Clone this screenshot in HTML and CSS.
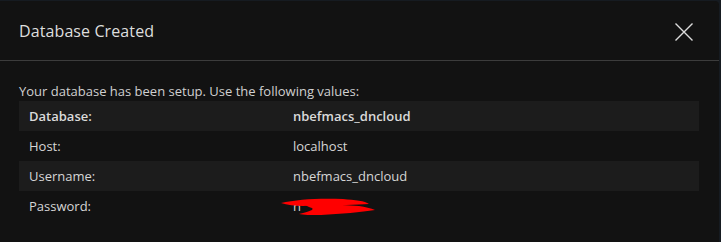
FILE: index.html
```html
<!DOCTYPE html>
<html lang="en">
  <head>
    <meta charset="UTF-8" />
    <title>Database Created</title>
    <link rel="stylesheet" href="styles.css">
  </head>
  <body>
    <div class="db-modal">
      <div class="db-modal-header">
        <h4 class="db-modal-title">Database Created</h4>
        <button class="db-modal-close" type="button" aria-label="Close">
          <svg width="18" height="18" viewBox="0 0 18 18">
            <path d="M0.5 0.5 L17.5 17.5 M17.5 0.5 L0.5 17.5" stroke="#dcdcdc" stroke-width="1.4" fill="none" />
          </svg>
        </button>
      </div>
      <div class="db-modal-body">
        <p class="db-intro">Your database has been setup. Use the following values:</p>
        <table class="db-table">
          <tr class="db-row-main">
            <td>Database:</td>
            <td>nbefmacs_dncloud</td>
          </tr>
          <tr>
            <td>Host:</td>
            <td>localhost</td>
          </tr>
          <tr>
            <td>Username:</td>
            <td>nbefmacs_dncloud</td>
          </tr>
          <tr>
            <td>Password:</td>
            <td class="db-secret">
              n
              <!-- redacted -->
              <svg class="db-scribble" width="96" height="22" viewBox="0 0 96 22">
                <path d="M0 6 C 16 2, 40 1, 62 2 C 74 3, 84 4, 88 7 C 76 8, 56 8, 40 8 L 22 9 C 14 9, 6 8, 0 6 Z" fill="#ff0000" />
                <path d="M24 8 C 44 7, 64 8, 78 9 C 84 10, 90 11, 94 13 C 80 15, 60 17, 40 18 C 30 18, 22 18, 18 17 C 30 14, 36 12, 28 10 Z" fill="#ff0000" />
              </svg>
            </td>
          </tr>
        </table>
      </div>
    </div>
  </body>
</html>
```

FILE: styles.css
```css
html,
body {
  margin: 0;
  height: 100%;
  background: #161b21;
}

body {
  padding-top: 1px;
  box-sizing: border-box;
  font-family: "Open Sans", "Liberation Sans", sans-serif;
  overflow: hidden;
}

.db-modal {
  width: 719px;
  height: 100%;
  background: #121212;
  border-top-right-radius: 4px;
  color: #d2d2d2;
}

.db-modal-header {
  display: flex;
  align-items: center;
  justify-content: space-between;
  height: 59px;
  padding: 0 26px 0 19px;
  border-bottom: 1px solid #3c3c3c;
}

.db-modal-title {
  margin: 0;
  font-size: 16px;
  font-weight: 400;
  color: #dedede;
  letter-spacing: 0.1px;
}

.db-modal-close {
  display: flex;
  padding: 0;
  background: none;
  border: none;
  margin-top: 2px;
}

.db-modal-body {
  padding: 20px 20px 0 19px;
}

.db-intro {
  margin: 0;
  height: 20px;
  line-height: 20px;
  font-size: 13px;
  color: #d0d0d0;
}

.db-table {
  width: 680px;
  border-collapse: collapse;
  font-size: 13px;
}

.db-table td {
  height: 30px;
  padding: 0 10px;
  color: #d6d6d6;
}

.db-table td:first-child {
  width: 244px;
}

.db-table tr:nth-child(odd) td {
  background: #1c1c1c;
}

.db-table .db-row-main td {
  font-weight: 600;
  color: #dadada;
}

.db-secret {
  position: relative;
}

.db-scribble {
  position: absolute;
  left: -2px;
  top: 6px;
}
```
